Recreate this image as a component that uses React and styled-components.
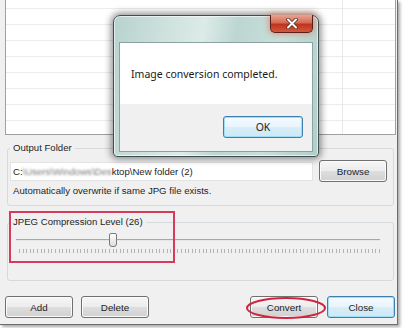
import React from "react";
import styled, { createGlobalStyle } from "styled-components";

const GlobalStyle = createGlobalStyle`
  html, body {
    margin: 0;
    padding: 0;
    background: #ffffff;
    width: 409px;
    height: 328px;
    overflow: hidden;
  }
  * { box-sizing: border-box; }
`;

const Window = styled.div`
  position: relative;
  width: 398px;
  height: 325px;
  background: #f0f0f0;
  border-right: 1px solid #6d6d6d;
  border-bottom: 1px solid #6d6d6d;
  box-shadow: 2px 2px 3px rgba(0, 0, 0, 0.35);
  display: flex;
  flex-direction: column;
  font-family: "Liberation Sans", Arial, sans-serif;
  font-size: 9.6px;
  color: #1e1e1e;
`;

const List = styled.div`
  height: 135px;
  margin: 0 1px 0 5px;
  background-color: #ffffff;
  border: 1px solid #a0a0a0;
  border-top: none;
  background-image: linear-gradient(to right, transparent 336px, #e8e8e8 336px, #e8e8e8 337px, transparent 337px),
    repeating-linear-gradient(to bottom, transparent 0, transparent 15px, #ececec 15px, #ececec 16px);
  background-position: 0 0, 0 -7px;
`;

const Group = styled.fieldset`
  margin: ${(p) => p.$top}px 3px 0 7px;
  padding: ${(p) => p.$pad};
  border: 1px solid #d5dade;
  border-radius: 3px;
  min-width: 0;
`;

const Legend = styled.legend`
  padding: 0 3px;
  line-height: 12px;
  font-size: 9.6px;
`;

const FolderRow = styled.div`
  display: flex;
  align-items: center;
  gap: 6px;
  height: 20px;
  padding-right: 4px;
`;

const TextField = styled.div`
  flex: 1;
  height: 19px;
  background: #ffffff;
  border: 1px solid #e3e3e3;
  padding: 0 0 0 2px;
  display: flex;
  align-items: center;
  white-space: nowrap;
  overflow: hidden;
`;

const Blurred = styled.span`
  filter: blur(1.2px);
  color: #777;
`;

const Note = styled.div`
  margin-top: 4px;
  line-height: 12px;
  padding-left: 3px;
`;

const Button = styled.button`
  width: 68px;
  height: 22px;
  padding: 0;
  font-family: "Liberation Sans", Arial, sans-serif;
  font-size: 9.8px;
  color: #1e1e1e;
  border: 1px solid ${(p) => (p.$focus ? "#3c7fb1" : "#707070")};
  border-radius: 3px;
  background: ${(p) =>
    p.$focus
      ? "linear-gradient(#f4fbfe 0%, #e8f5fc 50%, #d8eef9 50%, #cde8f6 100%)"
      : "linear-gradient(#f6f6f6 0%, #ececec 50%, #dedede 50%, #d1d1d1 100%)"};
  box-shadow: inset 0 0 0 1px ${(p) => (p.$focus ? "#9fdcf8" : "#fbfbfb")};
`;

const Slider = styled.div`
  position: relative;
  width: 364px;
  height: 24px;
  margin-left: 6px;
`;

const Track = styled.div`
  position: absolute;
  left: 0;
  right: 0;
  top: 8px;
  height: 2px;
  border-top: 1px solid #a8a8a8;
  border-bottom: 1px solid #e6e6e6;
`;

const Ticks = styled.div`
  position: absolute;
  left: 3px;
  width: 361px;
  top: 18px;
  height: 4px;
  background-image: repeating-linear-gradient(to right, #b4b4b4 0, #b4b4b4 1px, transparent 1px, transparent 3.6px);
`;

const Thumb = styled.div`
  position: absolute;
  top: 2px;
  width: 8px;
  height: 14px;
  margin-left: -4px;
  border: 1px solid #7a7a7a;
  border-radius: 2px 2px 3px 3px;
  background: linear-gradient(#ffffff, #dcdcdc);
`;

const ButtonBar = styled.div`
  display: flex;
  justify-content: space-between;
  margin: 15px 2px 0 5px;
`;

const ButtonGroup = styled.div`
  display: flex;
  gap: ${(p) => p.$gap}px;
`;

const Highlight = styled.div`
  position: absolute;
  left: 9px;
  top: 211px;
  width: 166px;
  height: 52px;
  border: 2px solid #d83a5c;
  pointer-events: none;
`;

const Circle = styled.svg`
  position: absolute;
  left: 245px;
  top: 296px;
  pointer-events: none;
`;

const Dialog = styled.div`
  position: absolute;
  left: 113px;
  top: 15px;
  width: 206px;
  height: 142px;
  border: 1px solid #3f4f50;
  border-radius: 7px 7px 4px 4px;
  background: linear-gradient(100deg, #b7d2ce 0%, #cfe2de 25%, #dcebe8 40%, #bcd6d1 55%, #c9dfdb 75%, #b2cdc8 100%);
  box-shadow: 0 0 7px 2px rgba(0, 0, 0, 0.45), inset 0 0 0 1px rgba(255, 255, 255, 0.6);
  padding: 26px 5px 4px 5px;
  display: flex;
`;

const CloseX = styled.div`
  position: absolute;
  top: -1px;
  right: 5px;
  width: 43px;
  height: 18px;
  border: 1px solid #5a1f1a;
  border-top: none;
  border-radius: 0 0 5px 5px;
  background: linear-gradient(#e8a493 0%, #d56b55 45%, #c0331c 55%, #d2583d 100%);
  box-shadow: 0 0 6px 1px rgba(230, 90, 50, 0.55);
  display: flex;
  align-items: center;
  justify-content: center;
`;

const Client = styled.div`
  flex: 1;
  border: 1px solid #8aa3a2;
  display: flex;
  flex-direction: column;
  font-family: "Noto Sans", "Open Sans", sans-serif;
  font-size: 10.5px;
  color: #1a1a1a;
`;

const Message = styled.div`
  height: 61px;
  background: #ffffff;
  padding: 23px 0 0 11px;
  line-height: 16px;
`;

const DialogFooter = styled.div`
  flex: 1;
  background: #f0f0f0;
  display: flex;
  justify-content: flex-end;
  align-items: flex-start;
  padding: 12px 9px 0 0;
`;

const OkButton = styled(Button)`
  width: 80px;
  height: 22px;
  font-family: "Noto Sans", "Open Sans", sans-serif;
  font-size: 10.5px;
`;

export default function App() {
  const level = 26;
  return (
    <>
      <GlobalStyle />
      <Window>
        <List />
        <Group $top={7} $pad="7px 2px 8px 2px">
          <Legend>Output Folder</Legend>
          <FolderRow>
            <TextField>
              C:<Blurred>\Users\Windows\Des</Blurred>ktop\New folder (2)
            </TextField>
            <Button>Browse</Button>
          </FolderRow>
          <Note>Automatically overwrite if same JPG file exists.</Note>
        </Group>
        <Group $top={10} $pad="3px 2px 25px 2px">
          <Legend>JPEG Compression Level ({level})</Legend>
          <Slider>
            <Track />
            <Ticks />
            <Thumb style={{ left: 3 + (361 * level) / 100 }} />
          </Slider>
        </Group>
        <ButtonBar>
          <ButtonGroup $gap={8}>
            <Button>Add</Button>
            <Button>Delete</Button>
          </ButtonGroup>
          <ButtonGroup $gap={9}>
            <Button>Convert</Button>
            <Button $focus>Close</Button>
          </ButtonGroup>
        </ButtonBar>

        <Highlight />
        <Circle width="82" height="24" viewBox="0 0 82 24">
          <ellipse cx="41" cy="12" rx="39" ry="10" fill="none" stroke="#cf2440" strokeWidth="2" />
        </Circle>

        <Dialog>
          <CloseX>
            <svg width="12" height="11" viewBox="0 0 12 11">
              <path d="M2 1.5 L10 9.5 M10 1.5 L2 9.5" stroke="#5a2a22" strokeWidth="3.6" strokeLinecap="round" />
              <path d="M2 1.5 L10 9.5 M10 1.5 L2 9.5" stroke="#ffffff" strokeWidth="2" strokeLinecap="round" />
            </svg>
          </CloseX>
          <Client>
            <Message>Image conversion completed.</Message>
            <DialogFooter>
              <OkButton $focus>OK</OkButton>
            </DialogFooter>
          </Client>
        </Dialog>
      </Window>
    </>
  );
}
